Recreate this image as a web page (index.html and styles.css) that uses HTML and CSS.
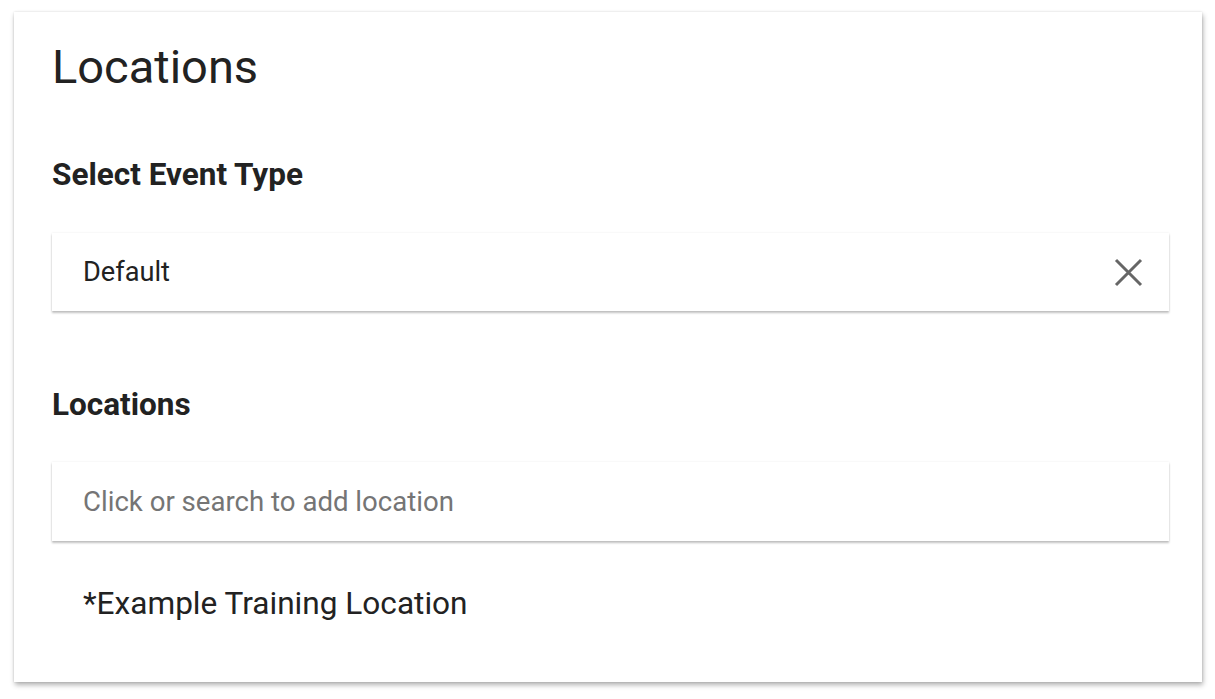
FILE: index.html
```html
<!DOCTYPE html>
<html>
<head>
<meta charset="utf-8">
<link rel="stylesheet" href="styles.css">
</head>
<body>
<div class="card">
  <h1 class="title">Locations</h1>
  <h2 class="label label-first">Select Event Type</h2>
  <div class="field select">
    <span class="value">Default</span>
    <svg class="clear" width="29" height="29" viewBox="0 0 29 29"><path d="M2 2L27 27M27 2L2 27" stroke="#666" stroke-width="3" fill="none"/></svg>
  </div>
  <h2 class="label label-second">Locations</h2>
  <div class="field input">
    <span class="placeholder">Click or search to add location</span>
  </div>
  <div class="item">*Example Training Location</div>
</div>
</body>
</html>
```
FILE: styles.css
```css
html, body {
  margin: 0;
  padding: 0;
  background: #ffffff;
}
body {
  font-family: Roboto, "Noto Sans", Arial, sans-serif;
  color: #212121;
  padding: 12px 12px 16px 14px;
}
.card {
  width: 1188px;
  height: 670px;
  box-sizing: border-box;
  background: #fff;
  box-shadow: 1px 3px 5px rgba(0,0,0,0.3), 0 0 2px rgba(0,0,0,0.12);
  padding: 29px 33px 0 38px;
}
.title {
  margin: 0;
  font-weight: 400;
  font-size: 47px;
  line-height: 52px;
  color: #222;
}
.label {
  margin: 0;
  font-weight: 700;
  font-size: 31.5px;
  line-height: 36px;
  color: #222;
}
.label-first { margin-top: 64px; }
.label-second { margin-top: 76px; }
.field {
  display: flex;
  align-items: center;
  box-sizing: border-box;
  background: #fff;
  box-shadow: 0 2px 2px rgba(0,0,0,0.24), 0 0 2px rgba(0,0,0,0.08);
  padding: 0 26px 0 31px;
}
.select {
  height: 78px;
  margin-top: 40px;
  justify-content: space-between;
}
.input {
  height: 79px;
  margin-top: 39px;
}
.value {
  font-size: 27.2px;
  color: #222;
}
.placeholder {
  font-size: 27.6px;
  color: #757575;
}
.clear { display: block; }
.item {
  margin-top: 44px;
  padding-left: 31px;
  font-size: 31.6px;
  color: #222;
}
```
